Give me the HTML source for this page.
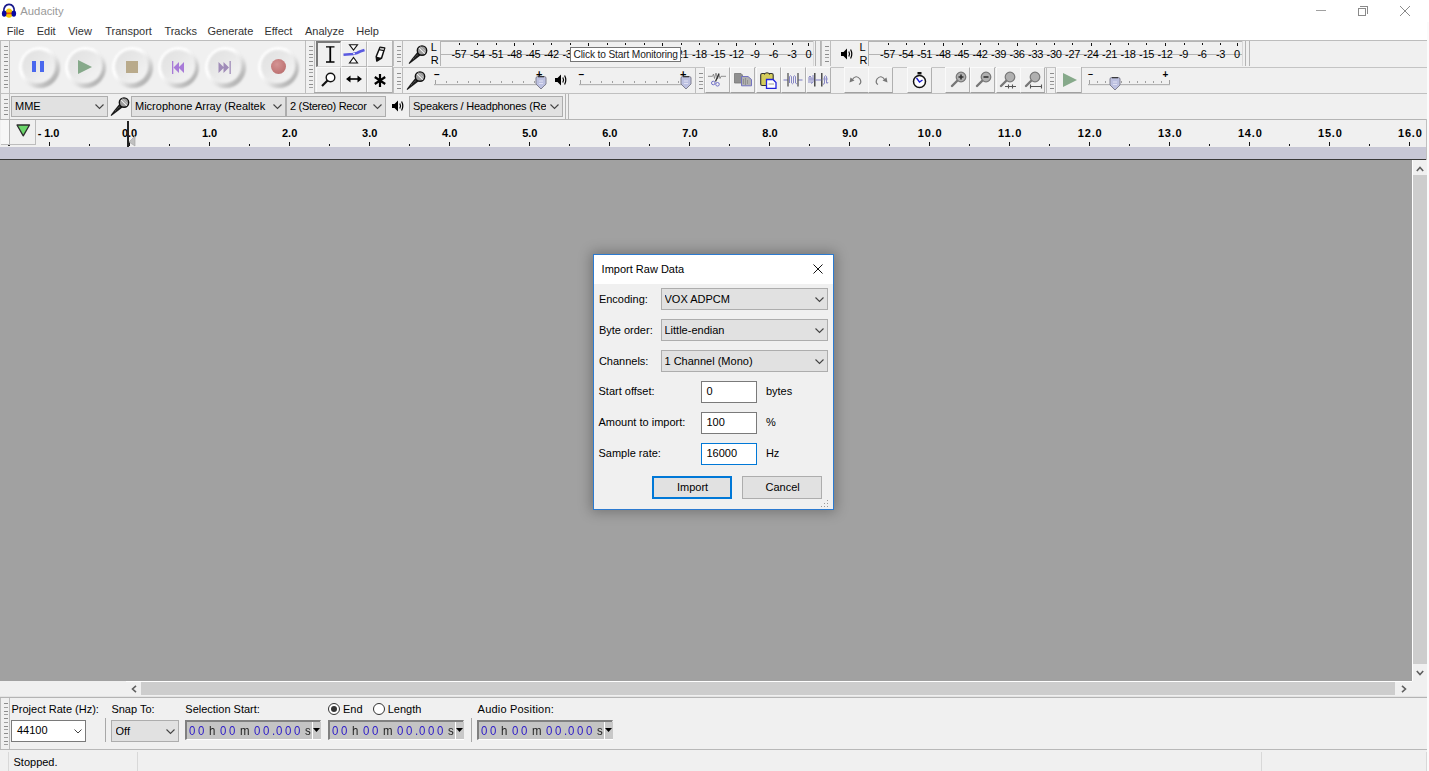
<!DOCTYPE html>
<html><head><meta charset="utf-8"><style>
*{box-sizing:border-box;margin:0;padding:0}
html,body{width:1429px;height:771px;overflow:hidden;background:#fff;font-family:"Liberation Sans",sans-serif;color:#000}
.a{position:absolute}
.t{position:absolute;white-space:nowrap;line-height:1}
svg{overflow:visible}
</style></head><body>
<div class="a" style="left:0px;top:0px;width:1429px;height:22px;background:#fff"></div>
<div class="a" style="left:0px;top:22px;width:1427px;height:18px;background:#fff"></div>
<div class="a" style="left:0px;top:40px;width:1427px;height:79px;background:#f0f0f0"></div>
<div class="a" style="left:0px;top:40px;width:1427px;height:1px;background:#bdbdbd"></div>
<div class="a" style="left:0px;top:119px;width:1427px;height:28px;background:#f0f0f0"></div>
<div class="a" style="left:0px;top:119px;width:1427px;height:1px;background:#b4b4b4"></div>
<div class="a" style="left:0px;top:147px;width:1427px;height:12px;background:#c8c8d6"></div>
<div class="a" style="left:0px;top:159px;width:1427px;height:1px;background:#3a3a3a"></div>
<div class="a" style="left:0px;top:160px;width:1412px;height:521px;background:#a1a1a1"></div>
<div class="a" style="left:1412px;top:160px;width:15px;height:521px;background:#f0f0f0"></div>
<div class="a" style="left:1412px;top:160px;width:1px;height:521px;background:#fff"></div>
<div class="a" style="left:0px;top:681px;width:1427px;height:15px;background:#f0f0f0"></div>
<div class="a" style="left:0px;top:697px;width:1427px;height:1px;background:#b4b4b4"></div>
<div class="a" style="left:0px;top:698px;width:1427px;height:52px;background:#f0f0f0"></div>
<div class="a" style="left:0px;top:696px;width:1427px;height:1px;background:#e4e4e4"></div>
<div class="a" style="left:0px;top:749px;width:1427px;height:1px;background:#b8b8b8"></div>
<div class="a" style="left:0px;top:750px;width:1427px;height:21px;background:#f0f0f0"></div>
<div class="a" style="left:1427px;top:22px;width:2px;height:749px;background:#fbfbfb"></div>
<svg class="a" style="left:1px;top:3px;" width="16" height="15" viewBox="0 0 16 15">
<path d="M2.6 9 C2.6 3.6 5.2 1.3 8 1.3 C10.8 1.3 13.4 3.6 13.4 9" fill="none" stroke="#1a1a8c" stroke-width="1.7"/>
<ellipse cx="8" cy="10.2" rx="3.8" ry="4.6" fill="#f7c800"/>
<rect x="4.3" y="9.5" width="7.4" height="1.7" fill="#ea4a10"/>
<ellipse cx="3.2" cy="10.6" rx="2.3" ry="3.2" fill="#0a0aa0"/>
<ellipse cx="12.8" cy="10.6" rx="2.3" ry="3.2" fill="#0a0aa0"/>
</svg>
<div class="t" style="left:20.30px;top:6.03px;font-size:11.3px;color:#9a9a9a;font-weight:normal;">Audacity</div>
<div class="a" style="left:1316px;top:10px;width:10px;height:1px;background:#a0a0a0"></div>
<div class="a" style="left:1358px;top:8px;width:8px;height:8px;border:1px solid #8a8a8a"></div>
<div class="a" style="left:1360px;top:6px;width:8px;height:8px;border-top:1px solid #8a8a8a;border-right:1px solid #8a8a8a"></div>
<svg class="a" style="left:1400px;top:6px;" width="10" height="10" viewBox="0 0 10 10"><path d="M0 0 L10 10 M10 0 L0 10" stroke="#8a8a8a" stroke-width="1"/></svg>
<div class="t" style="left:6.70px;top:25.69px;font-size:11px;color:#333;font-weight:normal;">File</div>
<div class="t" style="left:36.70px;top:25.69px;font-size:11px;color:#333;font-weight:normal;">Edit</div>
<div class="t" style="left:68.20px;top:25.69px;font-size:11px;color:#333;font-weight:normal;">View</div>
<div class="t" style="left:105.20px;top:25.69px;font-size:11px;color:#333;font-weight:normal;">Transport</div>
<div class="t" style="left:164.40px;top:25.69px;font-size:11px;color:#333;font-weight:normal;">Tracks</div>
<div class="t" style="left:207.40px;top:25.69px;font-size:11px;color:#333;font-weight:normal;">Generate</div>
<div class="t" style="left:264.40px;top:25.69px;font-size:11px;color:#333;font-weight:normal;">Effect</div>
<div class="t" style="left:305.00px;top:25.69px;font-size:11px;color:#333;font-weight:normal;">Analyze</div>
<div class="t" style="left:356.30px;top:25.69px;font-size:11px;color:#333;font-weight:normal;">Help</div>
<div class="a" style="left:0px;top:40px;width:1px;height:53px;background:#bdbdbd"></div>
<div class="a" style="left:0px;top:41px;width:10px;height:52px;border-left:1px solid #bdbdbd;border-right:1px solid #bdbdbd"></div>
<div class="a" style="left:4px;top:46px;width:4px;height:1px;background:#8c8c8c"></div>
<div class="a" style="left:4px;top:50px;width:4px;height:1px;background:#a0a0a0"></div>
<div class="a" style="left:4px;top:54px;width:4px;height:1px;background:#8c8c8c"></div>
<div class="a" style="left:4px;top:57px;width:4px;height:1px;background:#a0a0a0"></div>
<div class="a" style="left:4px;top:61px;width:4px;height:1px;background:#8c8c8c"></div>
<div class="a" style="left:4px;top:65px;width:4px;height:1px;background:#a0a0a0"></div>
<div class="a" style="left:4px;top:69px;width:4px;height:1px;background:#8c8c8c"></div>
<div class="a" style="left:4px;top:72px;width:4px;height:1px;background:#a0a0a0"></div>
<div class="a" style="left:4px;top:76px;width:4px;height:1px;background:#8c8c8c"></div>
<div class="a" style="left:4px;top:80px;width:4px;height:1px;background:#a0a0a0"></div>
<div class="a" style="left:4px;top:84px;width:4px;height:1px;background:#8c8c8c"></div>
<div class="a" style="left:4px;top:87px;width:4px;height:1px;background:#a0a0a0"></div>
<div class="a" style="left:305px;top:40px;width:1px;height:53px;background:#b4b4b4"></div>
<div class="a" style="left:18.5px;top:46.5px;width:41.0px;height:41.0px;border-radius:50%;background:linear-gradient(135deg,#ffffff 0%,#fdfdfd 38%,#e6e6e6 58%,#b8b8b8 80%,#9a9a9a 100%);filter:blur(1.2px)"></div>
<div class="a" style="left:21.6px;top:49.6px;width:33.8px;height:33.8px;border-radius:50%;background:linear-gradient(135deg,#e0e0e0 0%,#e7e7e7 40%,#efefef 72%,#f3f3f3 100%);filter:blur(0.8px)"></div>
<div class="a" style="left:32px;top:61px;width:4px;height:11px;background:#4a68ee"></div><div class="a" style="left:39.5px;top:61px;width:4px;height:11px;background:#4a68ee"></div>
<div class="a" style="left:65.0px;top:46.5px;width:41.0px;height:41.0px;border-radius:50%;background:linear-gradient(135deg,#ffffff 0%,#fdfdfd 38%,#e6e6e6 58%,#b8b8b8 80%,#9a9a9a 100%);filter:blur(1.2px)"></div>
<div class="a" style="left:68.1px;top:49.6px;width:33.8px;height:33.8px;border-radius:50%;background:linear-gradient(135deg,#e0e0e0 0%,#e7e7e7 40%,#efefef 72%,#f3f3f3 100%);filter:blur(0.8px)"></div>
<svg class="a" style="left:78px;top:60px" width="14" height="14"><path d="M0 0 L14 7 L0 14 Z" fill="#86a98a"/></svg>
<div class="a" style="left:111.5px;top:46.5px;width:41.0px;height:41.0px;border-radius:50%;background:linear-gradient(135deg,#ffffff 0%,#fdfdfd 38%,#e6e6e6 58%,#b8b8b8 80%,#9a9a9a 100%);filter:blur(1.2px)"></div>
<div class="a" style="left:114.6px;top:49.6px;width:33.8px;height:33.8px;border-radius:50%;background:linear-gradient(135deg,#e0e0e0 0%,#e7e7e7 40%,#efefef 72%,#f3f3f3 100%);filter:blur(0.8px)"></div>
<div class="a" style="left:125.5px;top:61px;width:12px;height:12px;background:#b9aa8b"></div>
<div class="a" style="left:158.0px;top:46.5px;width:41.0px;height:41.0px;border-radius:50%;background:linear-gradient(135deg,#ffffff 0%,#fdfdfd 38%,#e6e6e6 58%,#b8b8b8 80%,#9a9a9a 100%);filter:blur(1.2px)"></div>
<div class="a" style="left:161.1px;top:49.6px;width:33.8px;height:33.8px;border-radius:50%;background:linear-gradient(135deg,#e0e0e0 0%,#e7e7e7 40%,#efefef 72%,#f3f3f3 100%);filter:blur(0.8px)"></div>
<svg class="a" style="left:171.5px;top:60.5px" width="13" height="13"><rect x="0" y="0" width="1.3" height="13" fill="#a87ad8"/><path d="M1.5 6.5 L7 1 L7 12 Z M6.5 6.5 L12 1 L12 12 Z" fill="#a87ad8"/></svg>
<div class="a" style="left:204.5px;top:46.5px;width:41.0px;height:41.0px;border-radius:50%;background:linear-gradient(135deg,#ffffff 0%,#fdfdfd 38%,#e6e6e6 58%,#b8b8b8 80%,#9a9a9a 100%);filter:blur(1.2px)"></div>
<div class="a" style="left:207.6px;top:49.6px;width:33.8px;height:33.8px;border-radius:50%;background:linear-gradient(135deg,#e0e0e0 0%,#e7e7e7 40%,#efefef 72%,#f3f3f3 100%);filter:blur(0.8px)"></div>
<svg class="a" style="left:218px;top:60.5px" width="13" height="13"><rect x="11.5" y="0" width="1.3" height="13" fill="#a08cb8"/><path d="M0.5 1 L6 6.5 L0.5 12 Z M5.5 1 L11 6.5 L5.5 12 Z" fill="#a08cb8"/></svg>
<div class="a" style="left:258.0px;top:46.5px;width:41.0px;height:41.0px;border-radius:50%;background:linear-gradient(135deg,#ffffff 0%,#fdfdfd 38%,#e6e6e6 58%,#b8b8b8 80%,#9a9a9a 100%);filter:blur(1.2px)"></div>
<div class="a" style="left:261.1px;top:49.6px;width:33.8px;height:33.8px;border-radius:50%;background:linear-gradient(135deg,#e0e0e0 0%,#e7e7e7 40%,#efefef 72%,#f3f3f3 100%);filter:blur(0.8px)"></div>
<div class="a" style="left:270.5px;top:59px;width:15px;height:15px;border-radius:50%;background:radial-gradient(circle at 40% 35%, #d49494, #c27878 60%, #b06868)"></div>
<div class="a" style="left:305px;top:41px;width:10px;height:52px;border-left:1px solid #bdbdbd;border-right:1px solid #bdbdbd"></div>
<div class="a" style="left:309px;top:46px;width:4px;height:1px;background:#8c8c8c"></div>
<div class="a" style="left:309px;top:50px;width:4px;height:1px;background:#a0a0a0"></div>
<div class="a" style="left:309px;top:54px;width:4px;height:1px;background:#8c8c8c"></div>
<div class="a" style="left:309px;top:57px;width:4px;height:1px;background:#a0a0a0"></div>
<div class="a" style="left:309px;top:61px;width:4px;height:1px;background:#8c8c8c"></div>
<div class="a" style="left:309px;top:65px;width:4px;height:1px;background:#a0a0a0"></div>
<div class="a" style="left:309px;top:69px;width:4px;height:1px;background:#8c8c8c"></div>
<div class="a" style="left:309px;top:72px;width:4px;height:1px;background:#a0a0a0"></div>
<div class="a" style="left:309px;top:76px;width:4px;height:1px;background:#8c8c8c"></div>
<div class="a" style="left:309px;top:80px;width:4px;height:1px;background:#a0a0a0"></div>
<div class="a" style="left:309px;top:84px;width:4px;height:1px;background:#8c8c8c"></div>
<div class="a" style="left:309px;top:87px;width:4px;height:1px;background:#a0a0a0"></div>
<div class="a" style="left:316px;top:41px;width:25px;height:26px;background:#f0f0f0;border-top:2px solid #7a7a7a;border-left:2px solid #7a7a7a;border-right:1px solid #d8d8d8;border-bottom:1px solid #d8d8d8"></div>
<div class="a" style="left:341px;top:41px;width:26px;height:26px;background:#f0f0f0;border-right:1px solid #b8b8b8;border-bottom:1px solid #b8b8b8;border-top:1px solid #fafafa;border-left:1px solid #fafafa"></div>
<div class="a" style="left:367px;top:41px;width:26px;height:26px;background:#f0f0f0;border-right:1px solid #b8b8b8;border-bottom:1px solid #b8b8b8;border-top:1px solid #fafafa;border-left:1px solid #fafafa"></div>
<div class="a" style="left:316px;top:67px;width:25px;height:26px;background:#f0f0f0;border-right:1px solid #b8b8b8;border-bottom:1px solid #b8b8b8;border-top:1px solid #fafafa;border-left:1px solid #fafafa"></div>
<div class="a" style="left:341px;top:67px;width:26px;height:26px;background:#f0f0f0;border-right:1px solid #b8b8b8;border-bottom:1px solid #b8b8b8;border-top:1px solid #fafafa;border-left:1px solid #fafafa"></div>
<div class="a" style="left:367px;top:67px;width:26px;height:26px;background:#f0f0f0;border-right:1px solid #b8b8b8;border-bottom:1px solid #b8b8b8;border-top:1px solid #fafafa;border-left:1px solid #fafafa"></div>
<div class="a" style="left:314px;top:92px;width:79px;height:1px;background:#a8a8a8"></div>
<div class="a" style="left:392px;top:40px;width:1px;height:53px;background:#b4b4b4"></div>
<svg class="a" style="left:326px;top:46px;" width="9" height="17" viewBox="0 0 9 17"><path d="M0 0.8 H8.5 M0 16 H8.5" stroke="#000" stroke-width="1.3" fill="none"/><path d="M4.25 0.8 V16" stroke="#000" stroke-width="1.8"/></svg>
<svg class="a" style="left:343px;top:43.5px;" width="22" height="20" viewBox="0 0 22 20"><path d="M6.5 0.8 H14.5 L10.5 6 Z M6.5 19 H14.5 L10.5 13.5 Z" fill="#fff" stroke="#111" stroke-width="1.1"/><path d="M0.5 10.8 L10 10 L14 9 L17 7.5 L21.5 6" stroke="#5a5ae0" stroke-width="2.6" fill="none"/><circle cx="11" cy="9.6" r="0.9" fill="#fff"/></svg>
<svg class="a" style="left:375px;top:46px;" width="11" height="16" viewBox="0 0 11 16"><path d="M5 1.3 L9.7 2.1 L6.6 12 L1.8 15 L1.2 10.5 Z" fill="#fff" stroke="#111" stroke-width="1.5" stroke-linejoin="round"/><path d="M4.2 3.6 L9.1 4.6" stroke="#111" stroke-width="1.3"/><path d="M5.3 1.8 L9.1 2.5 L8.8 3.9 L4.8 3.1 Z" fill="#bbb"/><path d="M1.2 10.5 L1.8 15 L6.6 12 Z" fill="#111"/></svg>
<svg class="a" style="left:321px;top:72px;" width="15" height="15" viewBox="0 0 15 15"><circle cx="9.5" cy="5.5" r="4.3" fill="#fff" stroke="#111" stroke-width="1.4"/><path d="M6.5 8.5 L1 14" stroke="#111" stroke-width="2.2"/></svg>
<svg class="a" style="left:346px;top:75px;" width="16" height="8" viewBox="0 0 16 8"><path d="M3.5 4 H12.5" stroke="#000" stroke-width="1.6"/><path d="M0 4 L4.5 0.5 L4.5 7.5 Z M16 4 L11.5 0.5 L11.5 7.5 Z" fill="#000"/></svg>
<svg class="a" style="left:374px;top:74px;" width="12" height="13" viewBox="0 0 12 13"><path d="M6 0 V13 M0.8 3 L11.2 10 M11.2 3 L0.8 10" stroke="#000" stroke-width="2.2"/></svg>
<div class="a" style="left:393px;top:41px;width:10px;height:25px;border-left:1px solid #bdbdbd;border-right:1px solid #bdbdbd"></div>
<div class="a" style="left:397px;top:46px;width:4px;height:1px;background:#8c8c8c"></div>
<div class="a" style="left:397px;top:50px;width:4px;height:1px;background:#a0a0a0"></div>
<div class="a" style="left:397px;top:54px;width:4px;height:1px;background:#8c8c8c"></div>
<div class="a" style="left:397px;top:57px;width:4px;height:1px;background:#a0a0a0"></div>
<div class="a" style="left:397px;top:61px;width:4px;height:1px;background:#8c8c8c"></div>
<div class="a" style="left:393px;top:67px;width:1034px;height:1px;background:#c4c4c4"></div>
<svg class="a" style="left:408px;top:45px;" width="20" height="20" viewBox="0 0 20 20"><path d="M12.4 10.4 L9.2 7.2 L4.1 13.6 L0.6 18.2 L1.3 18.9 L5.9 15.4 Z" fill="#1a1a1a"/><path d="M10.3 9 L5 14.2" stroke="#888" stroke-width="0.9" stroke-dasharray="1 1"/><circle cx="14" cy="5.6" r="4.7" fill="#9c9c9c" stroke="#111" stroke-width="1.4"/><path d="M10.9 2.9 L16.8 8.6" stroke="#f0f0f0" stroke-width="1.1"/><path d="M12.5 1.8 L17.6 6.8" stroke="#c8c8c8" stroke-width="1"/></svg>
<div class="t" style="left:430.70px;top:41.69px;font-size:11px;color:#000;font-weight:normal;">L</div>
<div class="t" style="left:430.70px;top:54.69px;font-size:11px;color:#000;font-weight:normal;">R</div>
<div class="a" style="left:440px;top:41px;width:373px;height:13px;border-left:1px solid #b4b4b4;border-top:1px solid #b4b4b4"></div>
<div class="a" style="left:440px;top:54px;width:373px;height:12px;border-left:1px solid #b4b4b4;border-top:1px solid #b4b4b4"></div>
<div class="a" style="left:459px;top:43px;width:1px;height:2px;background:#111"></div>
<div class="t" style="left:443.90px;top:48.99px;width:30px;text-align:center;font-size:11px;letter-spacing:-0.35px;color:#000">-57</div>
<div class="a" style="left:477px;top:43px;width:1px;height:2px;background:#111"></div>
<div class="t" style="left:462.40px;top:48.99px;width:30px;text-align:center;font-size:11px;letter-spacing:-0.35px;color:#000">-54</div>
<div class="a" style="left:496px;top:43px;width:1px;height:2px;background:#111"></div>
<div class="t" style="left:480.90px;top:48.99px;width:30px;text-align:center;font-size:11px;letter-spacing:-0.35px;color:#000">-51</div>
<div class="a" style="left:514px;top:43px;width:1px;height:3px;background:#111"></div>
<div class="t" style="left:499.40px;top:48.99px;width:30px;text-align:center;font-size:11px;letter-spacing:-0.35px;color:#000">-48</div>
<div class="a" style="left:533px;top:43px;width:1px;height:2px;background:#111"></div>
<div class="t" style="left:517.90px;top:48.99px;width:30px;text-align:center;font-size:11px;letter-spacing:-0.35px;color:#000">-45</div>
<div class="a" style="left:551px;top:43px;width:1px;height:2px;background:#111"></div>
<div class="t" style="left:536.40px;top:48.99px;width:30px;text-align:center;font-size:11px;letter-spacing:-0.35px;color:#000">-42</div>
<div class="a" style="left:570px;top:43px;width:1px;height:2px;background:#111"></div>
<div class="t" style="left:554.90px;top:48.99px;width:30px;text-align:center;font-size:11px;letter-spacing:-0.35px;color:#000">-39</div>
<div class="a" style="left:588px;top:43px;width:1px;height:3px;background:#111"></div>
<div class="t" style="left:573.40px;top:48.99px;width:30px;text-align:center;font-size:11px;letter-spacing:-0.35px;color:#000">-36</div>
<div class="a" style="left:607px;top:43px;width:1px;height:2px;background:#111"></div>
<div class="t" style="left:591.90px;top:48.99px;width:30px;text-align:center;font-size:11px;letter-spacing:-0.35px;color:#000">-33</div>
<div class="a" style="left:625px;top:43px;width:1px;height:2px;background:#111"></div>
<div class="t" style="left:610.40px;top:48.99px;width:30px;text-align:center;font-size:11px;letter-spacing:-0.35px;color:#000">-30</div>
<div class="a" style="left:644px;top:43px;width:1px;height:2px;background:#111"></div>
<div class="t" style="left:628.90px;top:48.99px;width:30px;text-align:center;font-size:11px;letter-spacing:-0.35px;color:#000">-27</div>
<div class="a" style="left:662px;top:43px;width:1px;height:3px;background:#111"></div>
<div class="t" style="left:647.40px;top:48.99px;width:30px;text-align:center;font-size:11px;letter-spacing:-0.35px;color:#000">-24</div>
<div class="a" style="left:681px;top:43px;width:1px;height:2px;background:#111"></div>
<div class="t" style="left:665.90px;top:48.99px;width:30px;text-align:center;font-size:11px;letter-spacing:-0.35px;color:#000">-21</div>
<div class="a" style="left:699px;top:43px;width:1px;height:2px;background:#111"></div>
<div class="t" style="left:684.40px;top:48.99px;width:30px;text-align:center;font-size:11px;letter-spacing:-0.35px;color:#000">-18</div>
<div class="a" style="left:718px;top:43px;width:1px;height:2px;background:#111"></div>
<div class="t" style="left:702.90px;top:48.99px;width:30px;text-align:center;font-size:11px;letter-spacing:-0.35px;color:#000">-15</div>
<div class="a" style="left:736px;top:43px;width:1px;height:3px;background:#111"></div>
<div class="t" style="left:721.40px;top:48.99px;width:30px;text-align:center;font-size:11px;letter-spacing:-0.35px;color:#000">-12</div>
<div class="a" style="left:755px;top:43px;width:1px;height:2px;background:#111"></div>
<div class="t" style="left:739.90px;top:48.99px;width:30px;text-align:center;font-size:11px;letter-spacing:-0.35px;color:#000">-9</div>
<div class="a" style="left:773px;top:43px;width:1px;height:2px;background:#111"></div>
<div class="t" style="left:758.40px;top:48.99px;width:30px;text-align:center;font-size:11px;letter-spacing:-0.35px;color:#000">-6</div>
<div class="a" style="left:792px;top:43px;width:1px;height:2px;background:#111"></div>
<div class="t" style="left:776.90px;top:48.99px;width:30px;text-align:center;font-size:11px;letter-spacing:-0.35px;color:#000">-3</div>
<div class="a" style="left:808px;top:43px;width:1px;height:3px;background:#111"></div>
<div class="t" style="left:793.40px;top:48.99px;width:30px;text-align:center;font-size:11px;letter-spacing:-0.35px;color:#000">0</div>
<div class="a" style="left:813px;top:41px;width:1px;height:25px;background:#d8d8d8"></div>
<div class="a" style="left:815px;top:41px;width:1px;height:25px;background:#b4b4b4"></div>
<div class="a" style="left:820px;top:41px;width:1px;height:25px;background:#b4b4b4"></div>
<div class="a" style="left:821px;top:41px;width:10px;height:25px;border-left:1px solid #bdbdbd;border-right:1px solid #bdbdbd"></div>
<div class="a" style="left:825px;top:46px;width:4px;height:1px;background:#8c8c8c"></div>
<div class="a" style="left:825px;top:50px;width:4px;height:1px;background:#a0a0a0"></div>
<div class="a" style="left:825px;top:54px;width:4px;height:1px;background:#8c8c8c"></div>
<div class="a" style="left:825px;top:57px;width:4px;height:1px;background:#a0a0a0"></div>
<div class="a" style="left:825px;top:61px;width:4px;height:1px;background:#8c8c8c"></div>
<svg class="a" style="left:840.5px;top:48px;" width="12" height="12" viewBox="0 0 12 12"><path d="M0 4 H2.5 L6 0.5 V11.5 L2.5 8 H0 Z" fill="#000"/><path d="M7.8 3.5 Q9.3 6 7.8 8.5" stroke="#000" stroke-width="1.2" fill="none"/><path d="M9.6 1.5 Q12 6 9.6 10.5" stroke="#000" stroke-width="1.2" fill="none"/></svg>
<div class="t" style="left:859.50px;top:41.69px;font-size:11px;color:#000;font-weight:normal;">L</div>
<div class="t" style="left:859.50px;top:54.69px;font-size:11px;color:#000;font-weight:normal;">R</div>
<div class="a" style="left:868px;top:41px;width:374px;height:13px;border-left:1px solid #b4b4b4;border-top:1px solid #b4b4b4"></div>
<div class="a" style="left:868px;top:54px;width:374px;height:12px;border-left:1px solid #b4b4b4;border-top:1px solid #b4b4b4"></div>
<div class="a" style="left:888px;top:43px;width:1px;height:2px;background:#111"></div>
<div class="t" style="left:872.50px;top:48.99px;width:30px;text-align:center;font-size:11px;letter-spacing:-0.35px;color:#000">-57</div>
<div class="a" style="left:906px;top:43px;width:1px;height:2px;background:#111"></div>
<div class="t" style="left:891.00px;top:48.99px;width:30px;text-align:center;font-size:11px;letter-spacing:-0.35px;color:#000">-54</div>
<div class="a" style="left:924px;top:43px;width:1px;height:2px;background:#111"></div>
<div class="t" style="left:909.50px;top:48.99px;width:30px;text-align:center;font-size:11px;letter-spacing:-0.35px;color:#000">-51</div>
<div class="a" style="left:943px;top:43px;width:1px;height:3px;background:#111"></div>
<div class="t" style="left:928.00px;top:48.99px;width:30px;text-align:center;font-size:11px;letter-spacing:-0.35px;color:#000">-48</div>
<div class="a" style="left:962px;top:43px;width:1px;height:2px;background:#111"></div>
<div class="t" style="left:946.50px;top:48.99px;width:30px;text-align:center;font-size:11px;letter-spacing:-0.35px;color:#000">-45</div>
<div class="a" style="left:980px;top:43px;width:1px;height:2px;background:#111"></div>
<div class="t" style="left:965.00px;top:48.99px;width:30px;text-align:center;font-size:11px;letter-spacing:-0.35px;color:#000">-42</div>
<div class="a" style="left:998px;top:43px;width:1px;height:2px;background:#111"></div>
<div class="t" style="left:983.50px;top:48.99px;width:30px;text-align:center;font-size:11px;letter-spacing:-0.35px;color:#000">-39</div>
<div class="a" style="left:1017px;top:43px;width:1px;height:3px;background:#111"></div>
<div class="t" style="left:1002.00px;top:48.99px;width:30px;text-align:center;font-size:11px;letter-spacing:-0.35px;color:#000">-36</div>
<div class="a" style="left:1036px;top:43px;width:1px;height:2px;background:#111"></div>
<div class="t" style="left:1020.50px;top:48.99px;width:30px;text-align:center;font-size:11px;letter-spacing:-0.35px;color:#000">-33</div>
<div class="a" style="left:1054px;top:43px;width:1px;height:2px;background:#111"></div>
<div class="t" style="left:1039.00px;top:48.99px;width:30px;text-align:center;font-size:11px;letter-spacing:-0.35px;color:#000">-30</div>
<div class="a" style="left:1072px;top:43px;width:1px;height:2px;background:#111"></div>
<div class="t" style="left:1057.50px;top:48.99px;width:30px;text-align:center;font-size:11px;letter-spacing:-0.35px;color:#000">-27</div>
<div class="a" style="left:1091px;top:43px;width:1px;height:3px;background:#111"></div>
<div class="t" style="left:1076.00px;top:48.99px;width:30px;text-align:center;font-size:11px;letter-spacing:-0.35px;color:#000">-24</div>
<div class="a" style="left:1110px;top:43px;width:1px;height:2px;background:#111"></div>
<div class="t" style="left:1094.50px;top:48.99px;width:30px;text-align:center;font-size:11px;letter-spacing:-0.35px;color:#000">-21</div>
<div class="a" style="left:1128px;top:43px;width:1px;height:2px;background:#111"></div>
<div class="t" style="left:1113.00px;top:48.99px;width:30px;text-align:center;font-size:11px;letter-spacing:-0.35px;color:#000">-18</div>
<div class="a" style="left:1146px;top:43px;width:1px;height:2px;background:#111"></div>
<div class="t" style="left:1131.50px;top:48.99px;width:30px;text-align:center;font-size:11px;letter-spacing:-0.35px;color:#000">-15</div>
<div class="a" style="left:1165px;top:43px;width:1px;height:3px;background:#111"></div>
<div class="t" style="left:1150.00px;top:48.99px;width:30px;text-align:center;font-size:11px;letter-spacing:-0.35px;color:#000">-12</div>
<div class="a" style="left:1184px;top:43px;width:1px;height:2px;background:#111"></div>
<div class="t" style="left:1168.50px;top:48.99px;width:30px;text-align:center;font-size:11px;letter-spacing:-0.35px;color:#000">-9</div>
<div class="a" style="left:1202px;top:43px;width:1px;height:2px;background:#111"></div>
<div class="t" style="left:1187.00px;top:48.99px;width:30px;text-align:center;font-size:11px;letter-spacing:-0.35px;color:#000">-6</div>
<div class="a" style="left:1220px;top:43px;width:1px;height:2px;background:#111"></div>
<div class="t" style="left:1205.50px;top:48.99px;width:30px;text-align:center;font-size:11px;letter-spacing:-0.35px;color:#000">-3</div>
<div class="a" style="left:1237px;top:43px;width:1px;height:3px;background:#111"></div>
<div class="t" style="left:1222.00px;top:48.99px;width:30px;text-align:center;font-size:11px;letter-spacing:-0.35px;color:#000">0</div>
<div class="a" style="left:1242px;top:41px;width:1px;height:25px;background:#d8d8d8"></div>
<div class="a" style="left:1245px;top:41px;width:1px;height:25px;background:#b4b4b4"></div>
<div class="a" style="left:1249px;top:41px;width:1px;height:25px;background:#b4b4b4"></div>
<div class="a" style="left:393px;top:68px;width:10px;height:25px;border-left:1px solid #bdbdbd;border-right:1px solid #bdbdbd"></div>
<div class="a" style="left:397px;top:73px;width:4px;height:1px;background:#8c8c8c"></div>
<div class="a" style="left:397px;top:77px;width:4px;height:1px;background:#a0a0a0"></div>
<div class="a" style="left:397px;top:81px;width:4px;height:1px;background:#8c8c8c"></div>
<div class="a" style="left:397px;top:84px;width:4px;height:1px;background:#a0a0a0"></div>
<div class="a" style="left:397px;top:88px;width:4px;height:1px;background:#8c8c8c"></div>
<svg class="a" style="left:406px;top:71px;" width="20" height="20" viewBox="0 0 20 20"><path d="M12.4 10.4 L9.2 7.2 L4.1 13.6 L0.6 18.2 L1.3 18.9 L5.9 15.4 Z" fill="#1a1a1a"/><path d="M10.3 9 L5 14.2" stroke="#888" stroke-width="0.9" stroke-dasharray="1 1"/><circle cx="14" cy="5.6" r="4.7" fill="#9c9c9c" stroke="#111" stroke-width="1.4"/><path d="M10.9 2.9 L16.8 8.6" stroke="#f0f0f0" stroke-width="1.1"/><path d="M12.5 1.8 L17.6 6.8" stroke="#c8c8c8" stroke-width="1"/></svg>
<div class="t" style="left:434.00px;top:69.53px;font-size:10px;color:#000;font-weight:bold;">&#8211;</div>
<div class="a" style="left:434px;top:84px;width:112px;height:1px;background:#b4b4b4"></div>
<div class="a" style="left:434px;top:85px;width:112px;height:1px;background:#e4e4e4"></div>
<div class="a" style="left:435px;top:80px;width:1px;height:4px;background:#a0a0a0"></div>
<div class="a" style="left:446px;top:81px;width:1px;height:2px;background:#a0a0a0"></div>
<div class="a" style="left:457px;top:81px;width:1px;height:2px;background:#a0a0a0"></div>
<div class="a" style="left:468px;top:81px;width:1px;height:2px;background:#a0a0a0"></div>
<div class="a" style="left:479px;top:81px;width:1px;height:2px;background:#a0a0a0"></div>
<div class="a" style="left:490px;top:81px;width:1px;height:2px;background:#a0a0a0"></div>
<div class="a" style="left:501px;top:81px;width:1px;height:2px;background:#a0a0a0"></div>
<div class="a" style="left:512px;top:81px;width:1px;height:2px;background:#a0a0a0"></div>
<div class="a" style="left:523px;top:81px;width:1px;height:2px;background:#a0a0a0"></div>
<div class="a" style="left:534px;top:81px;width:1px;height:2px;background:#a0a0a0"></div>
<div class="a" style="left:545px;top:80px;width:1px;height:4px;background:#a0a0a0"></div>
<div class="t" style="left:536.00px;top:68.69px;font-size:11px;color:#000;font-weight:bold;">+</div>
<svg class="a" style="left:535px;top:76px;" width="12" height="14" viewBox="0 0 12 14"><path d="M1 2 Q1 0.5 3 0.5 H9 Q11 0.5 11 2 V8 L6 13 L1 8 Z" fill="#bcc0e0" stroke="#808090" stroke-width="1"/><path d="M3 0.7 H9" stroke="#333" stroke-width="1.2"/><path d="M4 5 H8 M4 7.5 H8" stroke="#e8e8f8" stroke-width="0.8"/></svg>
<svg class="a" style="left:555px;top:74px;" width="12" height="12" viewBox="0 0 12 12"><path d="M0 4 H2.5 L6 0.5 V11.5 L2.5 8 H0 Z" fill="#000"/><path d="M7.8 3.5 Q9.3 6 7.8 8.5" stroke="#000" stroke-width="1.2" fill="none"/><path d="M9.6 1.5 Q12 6 9.6 10.5" stroke="#000" stroke-width="1.2" fill="none"/></svg>
<div class="t" style="left:578.50px;top:69.53px;font-size:10px;color:#000;font-weight:bold;">&#8211;</div>
<div class="a" style="left:578.5px;top:84px;width:111.5px;height:1px;background:#b4b4b4"></div>
<div class="a" style="left:578.5px;top:85px;width:111.5px;height:1px;background:#e4e4e4"></div>
<div class="a" style="left:580px;top:80px;width:1px;height:4px;background:#a0a0a0"></div>
<div class="a" style="left:590px;top:81px;width:1px;height:2px;background:#a0a0a0"></div>
<div class="a" style="left:601px;top:81px;width:1px;height:2px;background:#a0a0a0"></div>
<div class="a" style="left:612px;top:81px;width:1px;height:2px;background:#a0a0a0"></div>
<div class="a" style="left:623px;top:81px;width:1px;height:2px;background:#a0a0a0"></div>
<div class="a" style="left:634px;top:81px;width:1px;height:2px;background:#a0a0a0"></div>
<div class="a" style="left:645px;top:81px;width:1px;height:2px;background:#a0a0a0"></div>
<div class="a" style="left:656px;top:81px;width:1px;height:2px;background:#a0a0a0"></div>
<div class="a" style="left:667px;top:81px;width:1px;height:2px;background:#a0a0a0"></div>
<div class="a" style="left:678px;top:81px;width:1px;height:2px;background:#a0a0a0"></div>
<div class="a" style="left:689px;top:80px;width:1px;height:4px;background:#a0a0a0"></div>
<div class="t" style="left:680.00px;top:68.69px;font-size:11px;color:#000;font-weight:bold;">+</div>
<svg class="a" style="left:679.5px;top:76px;" width="12" height="14" viewBox="0 0 12 14"><path d="M1 2 Q1 0.5 3 0.5 H9 Q11 0.5 11 2 V8 L6 13 L1 8 Z" fill="#bcc0e0" stroke="#808090" stroke-width="1"/><path d="M3 0.7 H9" stroke="#333" stroke-width="1.2"/><path d="M4 5 H8 M4 7.5 H8" stroke="#e8e8f8" stroke-width="0.8"/></svg>
<div class="a" style="left:695px;top:68px;width:10px;height:25px;border-left:1px solid #bdbdbd;border-right:1px solid #bdbdbd"></div>
<div class="a" style="left:699px;top:73px;width:4px;height:1px;background:#8c8c8c"></div>
<div class="a" style="left:699px;top:77px;width:4px;height:1px;background:#a0a0a0"></div>
<div class="a" style="left:699px;top:81px;width:4px;height:1px;background:#8c8c8c"></div>
<div class="a" style="left:699px;top:84px;width:4px;height:1px;background:#a0a0a0"></div>
<div class="a" style="left:699px;top:88px;width:4px;height:1px;background:#8c8c8c"></div>
<div class="a" style="left:705px;top:67px;width:25px;height:26px;border-right:1px solid #b0b0b0;border-bottom:1px solid #a0a0a0;border-left:1px solid #fafafa;border-top:1px solid #fafafa"></div>
<div class="a" style="left:730px;top:67px;width:25px;height:26px;border-right:1px solid #b0b0b0;border-bottom:1px solid #a0a0a0;border-left:1px solid #fafafa;border-top:1px solid #fafafa"></div>
<div class="a" style="left:756px;top:67px;width:25px;height:26px;border-right:1px solid #b0b0b0;border-bottom:1px solid #a0a0a0;border-left:1px solid #fafafa;border-top:1px solid #fafafa"></div>
<div class="a" style="left:781px;top:67px;width:25px;height:26px;border-right:1px solid #b0b0b0;border-bottom:1px solid #a0a0a0;border-left:1px solid #fafafa;border-top:1px solid #fafafa"></div>
<div class="a" style="left:806px;top:67px;width:25px;height:26px;border-right:1px solid #b0b0b0;border-bottom:1px solid #a0a0a0;border-left:1px solid #fafafa;border-top:1px solid #fafafa"></div>
<div class="a" style="left:844px;top:67px;width:25px;height:26px;border-right:1px solid #b0b0b0;border-bottom:1px solid #a0a0a0;border-left:1px solid #fafafa;border-top:1px solid #fafafa"></div>
<div class="a" style="left:868px;top:67px;width:25px;height:26px;border-right:1px solid #b0b0b0;border-bottom:1px solid #a0a0a0;border-left:1px solid #fafafa;border-top:1px solid #fafafa"></div>
<div class="a" style="left:907px;top:67px;width:25px;height:26px;border-right:1px solid #b0b0b0;border-bottom:1px solid #a0a0a0;border-left:1px solid #fafafa;border-top:1px solid #fafafa"></div>
<div class="a" style="left:945px;top:67px;width:25px;height:26px;border-right:1px solid #b0b0b0;border-bottom:1px solid #a0a0a0;border-left:1px solid #fafafa;border-top:1px solid #fafafa"></div>
<div class="a" style="left:970px;top:67px;width:25px;height:26px;border-right:1px solid #b0b0b0;border-bottom:1px solid #a0a0a0;border-left:1px solid #fafafa;border-top:1px solid #fafafa"></div>
<div class="a" style="left:996px;top:67px;width:25px;height:26px;border-right:1px solid #b0b0b0;border-bottom:1px solid #a0a0a0;border-left:1px solid #fafafa;border-top:1px solid #fafafa"></div>
<div class="a" style="left:1020px;top:67px;width:25px;height:26px;border-right:1px solid #b0b0b0;border-bottom:1px solid #a0a0a0;border-left:1px solid #fafafa;border-top:1px solid #fafafa"></div>
<svg class="a" style="left:707px;top:72px;" width="20" height="14" viewBox="0 0 20 14"><path d="M1 4.3 H5.5 L6.5 2 L7.5 6.5 L9 1 L10.5 7 L12 2.5 L13 6.5 L14 4.3 H19" stroke="#777" stroke-width="0.8" fill="none"/><path d="M12 1.5 L8.5 9.5" stroke="#333" stroke-width="1.3"/></svg>
<svg class="a" style="left:711px;top:80px;" width="9" height="7" viewBox="0 0 9 7"><circle cx="2.3" cy="3" r="1.8" fill="none" stroke="#7070c8" stroke-width="1"/><circle cx="6.5" cy="4.3" r="1.8" fill="none" stroke="#7070c8" stroke-width="1"/></svg>
<svg class="a" style="left:733.5px;top:72.5px;" width="19" height="14" viewBox="0 0 19 14"><path d="M0.5 0.5 H7 L8.5 2 V10 H0.5 Z" fill="#909090" stroke="#777" stroke-width="0.8"/><path d="M7.5 3.5 H14 L17.5 6.5 V12.8 H7.5 Z" fill="#b0b0b0" stroke="#7272c0" stroke-width="1"/><path d="M9.5 6 V11 M11.5 5 V12 M13.5 7 V11" stroke="#888" stroke-width="0.8"/></svg>
<svg class="a" style="left:759.5px;top:71.5px;" width="18" height="18" viewBox="0 0 18 18"><rect x="0.7" y="1.5" width="12.5" height="12" rx="1.5" fill="#d4cc5c" stroke="#333" stroke-width="1.1"/><path d="M4 2.5 Q7 -1 10 2.5" fill="#d4cc5c" stroke="#333" stroke-width="1"/><path d="M6.5 7.5 H13 L16 10.5 V16.3 H6.5 Z" fill="#fff" stroke="#2222dd" stroke-width="1.3"/><path d="M8.5 12 H14" stroke="#bbb" stroke-width="1.5"/></svg>
<svg class="a" style="left:783px;top:72px;" width="20" height="15" viewBox="0 0 20 15"><path d="M0.5 8 H5 M15 8 H19.5" stroke="#7a7ac0" stroke-width="1"/><path d="M5 1 V14.5 M15 1 V14.5" stroke="#555" stroke-width="1.3"/><path d="M6.5 11 V4.5 Q7.5 3 8.5 4.5 V11 Q9.5 12.5 10.5 11 V4.5 Q11.5 3 12.5 4.5 V11 Q13.5 12.5 14 11" stroke="#7a7ac0" stroke-width="0.9" fill="none"/></svg>
<svg class="a" style="left:807.5px;top:72px;" width="21" height="15" viewBox="0 0 21 15"><path d="M1 11 V5 Q2 3 3 5 V11 Q4 12 5 10 V3 M15 12 Q16 13 16.5 11 V4.5 Q17.5 3 18.5 4.5 V11 Q19.5 12 20 10" stroke="#7a7ac0" stroke-width="0.9" fill="none"/><path d="M1 7 H6 M15 7 H20" stroke="#9a9ad0" stroke-width="2.4" opacity="0.5"/><path d="M6.8 1 V14.5 M13.8 1 V14.5" stroke="#333" stroke-width="1.3"/><path d="M7 8 H13.5" stroke="#7a7ac0" stroke-width="1"/></svg>
<svg class="a" style="left:849px;top:75px;" width="14" height="10" viewBox="0 0 14 10"><path d="M3 5 Q7 -1 11 4 Q13 8 10 9.5" stroke="#777" stroke-width="1.2" fill="none"/><path d="M0.5 7.5 L1.5 2.5 L5.5 5.5 Z" fill="#777"/></svg>
<svg class="a" style="left:874px;top:75px;" width="14" height="10" viewBox="0 0 14 10"><path d="M11 5 Q7 -1 3 4 Q1 8 4 9.5" stroke="#777" stroke-width="1.2" fill="none"/><path d="M13.5 7.5 L12.5 2.5 L8.5 5.5 Z" fill="#777"/></svg>
<svg class="a" style="left:912px;top:72px;" width="15" height="17" viewBox="0 0 15 17"><rect x="5.5" y="0" width="4" height="2.5" fill="#111"/><circle cx="7.5" cy="9.5" r="6" fill="#fff" stroke="#111" stroke-width="1.5"/><path d="M4.5 6 L7.5 10 L10.5 8" stroke="#1a1ad0" stroke-width="1.3" fill="none"/></svg>
<svg class="a" style="left:950px;top:71px;" width="20" height="18" viewBox="0 0 20 18"><path d="M2 15 L7 10" stroke="#777" stroke-width="2.4" stroke-linecap="round"/><circle cx="11" cy="6" r="4.8" fill="#b0b0b0" stroke="#777" stroke-width="1.2"/><path d="M8.5 6 H13.5 M11 3.5 V8.5" stroke="#333" stroke-width="1.6"/></svg>
<svg class="a" style="left:975px;top:71px;" width="20" height="18" viewBox="0 0 20 18"><path d="M2 15 L7 10" stroke="#777" stroke-width="2.4" stroke-linecap="round"/><circle cx="11" cy="6" r="4.8" fill="#b0b0b0" stroke="#777" stroke-width="1.2"/><path d="M8.5 6 H13.5" stroke="#333" stroke-width="1.6"/></svg>
<svg class="a" style="left:999px;top:71px;" width="20" height="18" viewBox="0 0 20 18"><path d="M2 15 L7 10" stroke="#777" stroke-width="2.4" stroke-linecap="round"/><circle cx="11" cy="6" r="4.8" fill="#b0b0b0" stroke="#777" stroke-width="1.2"/><path d="M6 15.5 H17 M9.5 13.5 V17.5 M13.5 13.5 V17.5" stroke="#555" stroke-width="1.1"/></svg>
<svg class="a" style="left:1024px;top:71px;" width="20" height="18" viewBox="0 0 20 18"><path d="M2 15 L7 10" stroke="#777" stroke-width="2.4" stroke-linecap="round"/><circle cx="11" cy="6" r="4.8" fill="#b0b0b0" stroke="#777" stroke-width="1.2"/><path d="M6.5 15.5 H17.5 M6.5 13.5 V17.5 M17.5 13.5 V17.5" stroke="#555" stroke-width="1.1"/></svg>
<div class="a" style="left:1046px;top:68px;width:10px;height:25px;border-left:1px solid #bdbdbd;border-right:1px solid #bdbdbd"></div>
<div class="a" style="left:1050px;top:73px;width:4px;height:1px;background:#8c8c8c"></div>
<div class="a" style="left:1050px;top:77px;width:4px;height:1px;background:#a0a0a0"></div>
<div class="a" style="left:1050px;top:81px;width:4px;height:1px;background:#8c8c8c"></div>
<div class="a" style="left:1050px;top:84px;width:4px;height:1px;background:#a0a0a0"></div>
<div class="a" style="left:1050px;top:88px;width:4px;height:1px;background:#8c8c8c"></div>
<div class="a" style="left:1056px;top:67px;width:26px;height:26px;border-right:1px solid #b0b0b0;border-bottom:1px solid #a0a0a0;border-left:1px solid #fafafa;border-top:1px solid #fafafa"></div>
<svg class="a" style="left:1062.5px;top:73px;" width="14" height="14" viewBox="0 0 14 14"><path d="M0 0 L14 7 L0 14 Z" fill="#86a98a"/></svg>
<div class="a" style="left:1081px;top:67px;width:1px;height:26px;background:#b4b4b4"></div>
<div class="t" style="left:1088.00px;top:69.88px;font-size:9px;color:#000;font-weight:bold;">&#8211;</div>
<div class="t" style="left:1162.50px;top:69.53px;font-size:10px;color:#000;font-weight:bold;">+</div>
<div class="a" style="left:1088px;top:84px;width:82px;height:1px;background:#b4b4b4"></div>
<div class="a" style="left:1088px;top:85px;width:82px;height:1px;background:#e4e4e4"></div>
<div class="a" style="left:1089px;top:80px;width:1px;height:4px;background:#a0a0a0"></div>
<div class="a" style="left:1097px;top:81px;width:1px;height:2px;background:#a0a0a0"></div>
<div class="a" style="left:1105px;top:81px;width:1px;height:2px;background:#a0a0a0"></div>
<div class="a" style="left:1113px;top:81px;width:1px;height:2px;background:#a0a0a0"></div>
<div class="a" style="left:1121px;top:81px;width:1px;height:2px;background:#a0a0a0"></div>
<div class="a" style="left:1129px;top:81px;width:1px;height:2px;background:#a0a0a0"></div>
<div class="a" style="left:1137px;top:81px;width:1px;height:2px;background:#a0a0a0"></div>
<div class="a" style="left:1145px;top:81px;width:1px;height:2px;background:#a0a0a0"></div>
<div class="a" style="left:1153px;top:81px;width:1px;height:2px;background:#a0a0a0"></div>
<div class="a" style="left:1161px;top:81px;width:1px;height:2px;background:#a0a0a0"></div>
<div class="a" style="left:1169px;top:80px;width:1px;height:4px;background:#a0a0a0"></div>
<svg class="a" style="left:1108.5px;top:76.5px;" width="12" height="14" viewBox="0 0 12 14"><path d="M1 2 Q1 0.5 3 0.5 H9 Q11 0.5 11 2 V8 L6 13 L1 8 Z" fill="#bcc0e0" stroke="#808090" stroke-width="1"/><path d="M3 0.7 H9" stroke="#333" stroke-width="1.2"/><path d="M4 5 H8 M4 7.5 H8" stroke="#e8e8f8" stroke-width="0.8"/></svg>
<div class="a" style="left:0px;top:94px;width:10px;height:25px;border-left:1px solid #bdbdbd;border-right:1px solid #bdbdbd"></div>
<div class="a" style="left:4px;top:99px;width:4px;height:1px;background:#8c8c8c"></div>
<div class="a" style="left:4px;top:103px;width:4px;height:1px;background:#a0a0a0"></div>
<div class="a" style="left:4px;top:107px;width:4px;height:1px;background:#8c8c8c"></div>
<div class="a" style="left:4px;top:110px;width:4px;height:1px;background:#a0a0a0"></div>
<div class="a" style="left:4px;top:114px;width:4px;height:1px;background:#8c8c8c"></div>
<div class="a" style="left:0px;top:93px;width:1427px;height:1px;background:#c0c0c0"></div>
<div class="a" style="left:11px;top:96px;width:97px;height:21px;background:#e1e1e1;border:1px solid #adadad"></div>
<div class="a" style="left:15px;top:97px;width:77px;height:19px;overflow:hidden"><div class="t" style="left:0;top:4.19px;font-size:11px;color:#000;letter-spacing:0px">MME</div></div>
<svg class="a" style="left:95px;top:104.0px;" width="9" height="5" viewBox="0 0 9 5"><path d="M0.5 0.5 L4.5 4.5 L8.5 0.5" stroke="#444" stroke-width="1.1" fill="none"/></svg>
<svg class="a" style="left:110px;top:97px;" width="20" height="20" viewBox="0 0 20 20"><path d="M12.4 10.4 L9.2 7.2 L4.1 13.6 L0.6 18.2 L1.3 18.9 L5.9 15.4 Z" fill="#1a1a1a"/><path d="M10.3 9 L5 14.2" stroke="#888" stroke-width="0.9" stroke-dasharray="1 1"/><circle cx="14" cy="5.6" r="4.7" fill="#9c9c9c" stroke="#111" stroke-width="1.4"/><path d="M10.9 2.9 L16.8 8.6" stroke="#f0f0f0" stroke-width="1.1"/><path d="M12.5 1.8 L17.6 6.8" stroke="#c8c8c8" stroke-width="1"/></svg>
<div class="a" style="left:131px;top:96px;width:155px;height:21px;background:#e1e1e1;border:1px solid #adadad"></div>
<div class="a" style="left:135px;top:97px;width:135px;height:19px;overflow:hidden"><div class="t" style="left:0;top:4.19px;font-size:11px;color:#000;letter-spacing:0px">Microphone Array (Realtek</div></div>
<svg class="a" style="left:273px;top:104.0px;" width="9" height="5" viewBox="0 0 9 5"><path d="M0.5 0.5 L4.5 4.5 L8.5 0.5" stroke="#444" stroke-width="1.1" fill="none"/></svg>
<div class="a" style="left:286px;top:96px;width:100px;height:21px;background:#e1e1e1;border:1px solid #adadad"></div>
<div class="a" style="left:290px;top:97px;width:77px;height:19px;overflow:hidden"><div class="t" style="left:0;top:4.19px;font-size:11px;color:#000;letter-spacing:-0.3px">2 (Stereo) Recor</div></div>
<svg class="a" style="left:373px;top:104.0px;" width="9" height="5" viewBox="0 0 9 5"><path d="M0.5 0.5 L4.5 4.5 L8.5 0.5" stroke="#444" stroke-width="1.1" fill="none"/></svg>
<svg class="a" style="left:392px;top:100px;" width="12" height="12" viewBox="0 0 12 12"><path d="M0 4 H2.5 L6 0.5 V11.5 L2.5 8 H0 Z" fill="#000"/><path d="M7.8 3.5 Q9.3 6 7.8 8.5" stroke="#000" stroke-width="1.2" fill="none"/><path d="M9.6 1.5 Q12 6 9.6 10.5" stroke="#000" stroke-width="1.2" fill="none"/></svg>
<div class="a" style="left:409px;top:96px;width:154px;height:21px;background:#e1e1e1;border:1px solid #adadad"></div>
<div class="a" style="left:413px;top:97px;width:133px;height:19px;overflow:hidden"><div class="t" style="left:0;top:4.19px;font-size:11px;color:#000;letter-spacing:-0.22px">Speakers / Headphones (Re</div></div>
<svg class="a" style="left:550px;top:104.0px;" width="9" height="5" viewBox="0 0 9 5"><path d="M0.5 0.5 L4.5 4.5 L8.5 0.5" stroke="#444" stroke-width="1.1" fill="none"/></svg>
<div class="a" style="left:565px;top:94px;width:1px;height:25px;background:#b4b4b4"></div>
<div class="a" style="left:568px;top:94px;width:1px;height:25px;background:#b4b4b4"></div>
<div class="a" style="left:570px;top:47px;width:111px;height:15px;background:#fff;border:1px solid #767676"></div>
<div class="t" style="left:573.50px;top:49.57px;font-size:10.2px;color:#222;font-weight:normal;letter-spacing:-0.15px">Click to Start Monitoring</div>
<div class="a" style="left:1px;top:120px;width:8px;height:24px;background:#f7f7f7"></div>
<div class="a" style="left:9px;top:120px;width:1px;height:25px;background:#b4b4b4"></div>
<div class="a" style="left:10px;top:120px;width:26px;height:25px;border-right:1px solid #bcbcbc;border-bottom:1px solid #bcbcbc"></div>
<div class="a" style="left:1px;top:144px;width:9px;height:1px;background:#bcbcbc"></div>
<div class="a" style="left:8px;top:145px;width:2px;height:1px;background:#333"></div>
<svg class="a" style="left:16.3px;top:123.5px;" width="15" height="13" viewBox="0 0 15 13"><path d="M1 1 H13.5 L7.25 11.8 Z" fill="#6ad66a" stroke="#2e2e2e" stroke-width="1.3" stroke-linejoin="round"/></svg>
<div class="t" style="left:37.80px;top:127.69px;font-size:11px;color:#000;font-weight:bold;">-</div>
<div class="t" style="left:44.20px;top:127.69px;font-size:11px;color:#000;font-weight:bold;">1.0</div>
<div class="a" style="left:49px;top:142px;width:1px;height:4px;background:#111"></div>
<div class="a" style="left:89px;top:144px;width:1px;height:2px;background:#111"></div>
<div class="t" style="left:109.55px;top:127.69px;width:40px;text-align:center;font-size:11px;font-weight:bold;letter-spacing:0px">0.0</div>
<div class="a" style="left:129px;top:142px;width:1px;height:4px;background:#111"></div>
<div class="a" style="left:169px;top:144px;width:1px;height:2px;background:#111"></div>
<div class="t" style="left:189.60px;top:127.69px;width:40px;text-align:center;font-size:11px;font-weight:bold;letter-spacing:0px">1.0</div>
<div class="a" style="left:209px;top:142px;width:1px;height:4px;background:#111"></div>
<div class="a" style="left:249px;top:144px;width:1px;height:2px;background:#111"></div>
<div class="t" style="left:269.65px;top:127.69px;width:40px;text-align:center;font-size:11px;font-weight:bold;letter-spacing:0px">2.0</div>
<div class="a" style="left:289px;top:142px;width:1px;height:4px;background:#111"></div>
<div class="a" style="left:329px;top:144px;width:1px;height:2px;background:#111"></div>
<div class="t" style="left:349.70px;top:127.69px;width:40px;text-align:center;font-size:11px;font-weight:bold;letter-spacing:0px">3.0</div>
<div class="a" style="left:369px;top:142px;width:1px;height:4px;background:#111"></div>
<div class="a" style="left:409px;top:144px;width:1px;height:2px;background:#111"></div>
<div class="t" style="left:429.75px;top:127.69px;width:40px;text-align:center;font-size:11px;font-weight:bold;letter-spacing:0px">4.0</div>
<div class="a" style="left:449px;top:142px;width:1px;height:4px;background:#111"></div>
<div class="a" style="left:489px;top:144px;width:1px;height:2px;background:#111"></div>
<div class="t" style="left:509.80px;top:127.69px;width:40px;text-align:center;font-size:11px;font-weight:bold;letter-spacing:0px">5.0</div>
<div class="a" style="left:529px;top:142px;width:1px;height:4px;background:#111"></div>
<div class="a" style="left:569px;top:144px;width:1px;height:2px;background:#111"></div>
<div class="t" style="left:589.85px;top:127.69px;width:40px;text-align:center;font-size:11px;font-weight:bold;letter-spacing:0px">6.0</div>
<div class="a" style="left:609px;top:142px;width:1px;height:4px;background:#111"></div>
<div class="a" style="left:649px;top:144px;width:1px;height:2px;background:#111"></div>
<div class="t" style="left:669.90px;top:127.69px;width:40px;text-align:center;font-size:11px;font-weight:bold;letter-spacing:0px">7.0</div>
<div class="a" style="left:689px;top:142px;width:1px;height:4px;background:#111"></div>
<div class="a" style="left:729px;top:144px;width:1px;height:2px;background:#111"></div>
<div class="t" style="left:749.95px;top:127.69px;width:40px;text-align:center;font-size:11px;font-weight:bold;letter-spacing:0px">8.0</div>
<div class="a" style="left:769px;top:142px;width:1px;height:4px;background:#111"></div>
<div class="a" style="left:809px;top:144px;width:1px;height:2px;background:#111"></div>
<div class="t" style="left:830.00px;top:127.69px;width:40px;text-align:center;font-size:11px;font-weight:bold;letter-spacing:0px">9.0</div>
<div class="a" style="left:849px;top:142px;width:1px;height:4px;background:#111"></div>
<div class="a" style="left:889px;top:144px;width:1px;height:2px;background:#111"></div>
<div class="t" style="left:910.05px;top:127.69px;width:40px;text-align:center;font-size:11px;font-weight:bold;letter-spacing:0.8px">10.0</div>
<div class="a" style="left:929px;top:142px;width:1px;height:4px;background:#111"></div>
<div class="a" style="left:969px;top:144px;width:1px;height:2px;background:#111"></div>
<div class="t" style="left:990.10px;top:127.69px;width:40px;text-align:center;font-size:11px;font-weight:bold;letter-spacing:0.8px">11.0</div>
<div class="a" style="left:1009px;top:142px;width:1px;height:4px;background:#111"></div>
<div class="a" style="left:1049px;top:144px;width:1px;height:2px;background:#111"></div>
<div class="t" style="left:1070.15px;top:127.69px;width:40px;text-align:center;font-size:11px;font-weight:bold;letter-spacing:0.8px">12.0</div>
<div class="a" style="left:1089px;top:142px;width:1px;height:4px;background:#111"></div>
<div class="a" style="left:1129px;top:144px;width:1px;height:2px;background:#111"></div>
<div class="t" style="left:1150.20px;top:127.69px;width:40px;text-align:center;font-size:11px;font-weight:bold;letter-spacing:0.8px">13.0</div>
<div class="a" style="left:1169px;top:142px;width:1px;height:4px;background:#111"></div>
<div class="a" style="left:1209px;top:144px;width:1px;height:2px;background:#111"></div>
<div class="t" style="left:1230.25px;top:127.69px;width:40px;text-align:center;font-size:11px;font-weight:bold;letter-spacing:0.8px">14.0</div>
<div class="a" style="left:1249px;top:142px;width:1px;height:4px;background:#111"></div>
<div class="a" style="left:1289px;top:144px;width:1px;height:2px;background:#111"></div>
<div class="t" style="left:1310.30px;top:127.69px;width:40px;text-align:center;font-size:11px;font-weight:bold;letter-spacing:0.8px">15.0</div>
<div class="a" style="left:1329px;top:142px;width:1px;height:4px;background:#111"></div>
<div class="a" style="left:1369px;top:144px;width:1px;height:2px;background:#111"></div>
<div class="t" style="left:1390.35px;top:127.69px;width:40px;text-align:center;font-size:11px;font-weight:bold;letter-spacing:0.8px">16.0</div>
<div class="a" style="left:1409px;top:142px;width:1px;height:4px;background:#111"></div>
<div class="a" style="left:127px;top:121px;width:1.5px;height:26px;background:#222"></div>
<svg class="a" style="left:128.5px;top:136px;" width="7" height="11" viewBox="0 0 7 11"><path d="M6 0 L0 6 L6 10 Z" fill="#c0c0c0" stroke="#a0a0a0" stroke-width="0.6"/></svg>
<div class="a" style="left:1426px;top:119px;width:1px;height:41px;background:#c0c0c0"></div>
<svg class="a" style="left:1415.5px;top:165.5px;" width="8" height="6" viewBox="0 0 8 6"><path d="M0.8 5 L4 1.5 L7.2 5" stroke="#606060" stroke-width="1.6" fill="none"/></svg>
<div class="a" style="left:1413px;top:175px;width:14px;height:489px;background:#cdcdcd"></div>
<svg class="a" style="left:1415.5px;top:670px;" width="8" height="6" viewBox="0 0 8 6"><path d="M0.8 1 L4 4.5 L7.2 1" stroke="#606060" stroke-width="1.6" fill="none"/></svg>
<div class="a" style="left:126px;top:681px;width:1286px;height:1px;background:#fff"></div>
<svg class="a" style="left:131px;top:685px;" width="6" height="8" viewBox="0 0 6 8"><path d="M5 0.8 L1.5 4 L5 7.2" stroke="#606060" stroke-width="1.6" fill="none"/></svg>
<div class="a" style="left:141px;top:682px;width:1254px;height:13px;background:#cdcdcd"></div>
<svg class="a" style="left:1401px;top:685px;" width="6" height="8" viewBox="0 0 6 8"><path d="M1 0.8 L4.5 4 L1 7.2" stroke="#606060" stroke-width="1.6" fill="none"/></svg>
<div class="a" style="left:0px;top:698px;width:10px;height:51px;border-left:1px solid #bdbdbd;border-right:1px solid #bdbdbd"></div>
<div class="a" style="left:4px;top:703px;width:4px;height:1px;background:#8c8c8c"></div>
<div class="a" style="left:4px;top:707px;width:4px;height:1px;background:#a0a0a0"></div>
<div class="a" style="left:4px;top:711px;width:4px;height:1px;background:#8c8c8c"></div>
<div class="a" style="left:4px;top:714px;width:4px;height:1px;background:#a0a0a0"></div>
<div class="a" style="left:4px;top:718px;width:4px;height:1px;background:#8c8c8c"></div>
<div class="a" style="left:4px;top:722px;width:4px;height:1px;background:#a0a0a0"></div>
<div class="a" style="left:4px;top:726px;width:4px;height:1px;background:#8c8c8c"></div>
<div class="a" style="left:4px;top:729px;width:4px;height:1px;background:#a0a0a0"></div>
<div class="a" style="left:4px;top:733px;width:4px;height:1px;background:#8c8c8c"></div>
<div class="a" style="left:4px;top:737px;width:4px;height:1px;background:#a0a0a0"></div>
<div class="a" style="left:4px;top:741px;width:4px;height:1px;background:#8c8c8c"></div>
<div class="a" style="left:4px;top:744px;width:4px;height:1px;background:#a0a0a0"></div>
<div class="t" style="left:11.50px;top:703.69px;font-size:11px;color:#000;font-weight:normal;">Project Rate (Hz):</div>
<div class="a" style="left:11px;top:720px;width:75px;height:22px;background:#fff;border:1px solid #7a7a7a"></div>
<div class="t" style="left:17.00px;top:725.19px;font-size:11px;color:#000;font-weight:normal;">44100</div>
<svg class="a" style="left:73.5px;top:729px;" width="8" height="5" viewBox="0 0 8 5"><path d="M0.5 0.5 L4 4 L7.5 0.5" stroke="#444" stroke-width="1" fill="none"/></svg>
<div class="a" style="left:105px;top:718px;width:1px;height:24px;background:#a8a8a8"></div>
<div class="t" style="left:111.40px;top:703.69px;font-size:11px;color:#000;font-weight:normal;">Snap To:</div>
<div class="a" style="left:111px;top:720px;width:68px;height:22px;background:#e1e1e1;border:1px solid #adadad"></div>
<div class="a" style="left:115.5px;top:721px;width:48px;height:20px;overflow:hidden"><div class="t" style="left:0;top:4.69px;font-size:11px;color:#000;letter-spacing:0px">Off</div></div>
<svg class="a" style="left:166px;top:728.5px;" width="9" height="5" viewBox="0 0 9 5"><path d="M0.5 0.5 L4.5 4.5 L8.5 0.5" stroke="#444" stroke-width="1.1" fill="none"/></svg>
<div class="t" style="left:185.30px;top:703.69px;font-size:11px;color:#000;font-weight:normal;">Selection Start:</div>
<div class="a" style="left:185px;top:720px;width:136px;height:20px;background:#c4c4c4;border-top:2px solid #808080;border-left:2px solid #808080;border-bottom:1px solid #fff;border-right:1px solid #fff"></div>
<div class="t" style="left:189.00px;top:724.00px;font-size:13px;color:#2a18c8;font-weight:normal;transform:scaleX(0.88);transform-origin:0 0">0</div>
<div class="t" style="left:198.40px;top:724.00px;font-size:13px;color:#2a18c8;font-weight:normal;transform:scaleX(0.88);transform-origin:0 0">0</div>
<div class="t" style="left:209.40px;top:724.00px;font-size:13px;color:#1e1e1e;font-weight:normal;transform:scaleX(0.88);transform-origin:0 0">h</div>
<div class="t" style="left:220.00px;top:724.00px;font-size:13px;color:#2a18c8;font-weight:normal;transform:scaleX(0.88);transform-origin:0 0">0</div>
<div class="t" style="left:229.00px;top:724.00px;font-size:13px;color:#2a18c8;font-weight:normal;transform:scaleX(0.88);transform-origin:0 0">0</div>
<div class="t" style="left:240.00px;top:724.00px;font-size:13px;color:#1e1e1e;font-weight:normal;transform:scaleX(0.88);transform-origin:0 0">m</div>
<div class="t" style="left:254.00px;top:724.00px;font-size:13px;color:#2a18c8;font-weight:normal;transform:scaleX(0.88);transform-origin:0 0">0</div>
<div class="t" style="left:263.40px;top:724.00px;font-size:13px;color:#2a18c8;font-weight:normal;transform:scaleX(0.88);transform-origin:0 0">0</div>
<div class="t" style="left:271.80px;top:724.00px;font-size:13px;color:#2a18c8;font-weight:normal;transform:scaleX(0.88);transform-origin:0 0">.</div>
<div class="t" style="left:275.50px;top:724.00px;font-size:13px;color:#2a18c8;font-weight:normal;transform:scaleX(0.88);transform-origin:0 0">0</div>
<div class="t" style="left:284.70px;top:724.00px;font-size:13px;color:#2a18c8;font-weight:normal;transform:scaleX(0.88);transform-origin:0 0">0</div>
<div class="t" style="left:294.00px;top:724.00px;font-size:13px;color:#2a18c8;font-weight:normal;transform:scaleX(0.88);transform-origin:0 0">0</div>
<div class="t" style="left:305.20px;top:724.00px;font-size:13px;color:#1e1e1e;font-weight:normal;transform:scaleX(0.88);transform-origin:0 0">s</div>
<div class="a" style="left:312px;top:722px;width:9px;height:17px;background:#c8c8c8;border-left:1px solid #fff"></div>
<svg class="a" style="left:313px;top:728px;" width="7" height="4" viewBox="0 0 7 4"><path d="M0 0 H7 L3.5 4 Z" fill="#000"/></svg>
<div class="a" style="left:328px;top:703px;width:12px;height:12px;border-radius:50%;background:#fff;border:1px solid #333"></div>
<div class="a" style="left:331px;top:706px;width:6px;height:6px;border-radius:50%;background:#333"></div>
<div class="t" style="left:343.00px;top:703.69px;font-size:11px;color:#000;font-weight:normal;">End</div>
<div class="a" style="left:372.6px;top:703px;width:12px;height:12px;border-radius:50%;background:#fff;border:1px solid #333"></div>
<div class="t" style="left:387.70px;top:703.69px;font-size:11px;color:#000;font-weight:normal;">Length</div>
<div class="a" style="left:328px;top:720px;width:136px;height:20px;background:#c4c4c4;border-top:2px solid #808080;border-left:2px solid #808080;border-bottom:1px solid #fff;border-right:1px solid #fff"></div>
<div class="t" style="left:332.00px;top:724.00px;font-size:13px;color:#2a18c8;font-weight:normal;transform:scaleX(0.88);transform-origin:0 0">0</div>
<div class="t" style="left:341.40px;top:724.00px;font-size:13px;color:#2a18c8;font-weight:normal;transform:scaleX(0.88);transform-origin:0 0">0</div>
<div class="t" style="left:352.40px;top:724.00px;font-size:13px;color:#1e1e1e;font-weight:normal;transform:scaleX(0.88);transform-origin:0 0">h</div>
<div class="t" style="left:363.00px;top:724.00px;font-size:13px;color:#2a18c8;font-weight:normal;transform:scaleX(0.88);transform-origin:0 0">0</div>
<div class="t" style="left:372.00px;top:724.00px;font-size:13px;color:#2a18c8;font-weight:normal;transform:scaleX(0.88);transform-origin:0 0">0</div>
<div class="t" style="left:383.00px;top:724.00px;font-size:13px;color:#1e1e1e;font-weight:normal;transform:scaleX(0.88);transform-origin:0 0">m</div>
<div class="t" style="left:397.00px;top:724.00px;font-size:13px;color:#2a18c8;font-weight:normal;transform:scaleX(0.88);transform-origin:0 0">0</div>
<div class="t" style="left:406.40px;top:724.00px;font-size:13px;color:#2a18c8;font-weight:normal;transform:scaleX(0.88);transform-origin:0 0">0</div>
<div class="t" style="left:414.80px;top:724.00px;font-size:13px;color:#2a18c8;font-weight:normal;transform:scaleX(0.88);transform-origin:0 0">.</div>
<div class="t" style="left:418.50px;top:724.00px;font-size:13px;color:#2a18c8;font-weight:normal;transform:scaleX(0.88);transform-origin:0 0">0</div>
<div class="t" style="left:427.70px;top:724.00px;font-size:13px;color:#2a18c8;font-weight:normal;transform:scaleX(0.88);transform-origin:0 0">0</div>
<div class="t" style="left:437.00px;top:724.00px;font-size:13px;color:#2a18c8;font-weight:normal;transform:scaleX(0.88);transform-origin:0 0">0</div>
<div class="t" style="left:448.20px;top:724.00px;font-size:13px;color:#1e1e1e;font-weight:normal;transform:scaleX(0.88);transform-origin:0 0">s</div>
<div class="a" style="left:455px;top:722px;width:9px;height:17px;background:#c8c8c8;border-left:1px solid #fff"></div>
<svg class="a" style="left:456px;top:728px;" width="7" height="4" viewBox="0 0 7 4"><path d="M0 0 H7 L3.5 4 Z" fill="#000"/></svg>
<div class="a" style="left:471px;top:718px;width:1px;height:24px;background:#a8a8a8"></div>
<div class="t" style="left:477.60px;top:703.69px;font-size:11px;color:#000;font-weight:normal;letter-spacing:0.2px">Audio Position:</div>
<div class="a" style="left:477px;top:720px;width:136px;height:20px;background:#c4c4c4;border-top:2px solid #808080;border-left:2px solid #808080;border-bottom:1px solid #fff;border-right:1px solid #fff"></div>
<div class="t" style="left:481.00px;top:724.00px;font-size:13px;color:#2a18c8;font-weight:normal;transform:scaleX(0.88);transform-origin:0 0">0</div>
<div class="t" style="left:490.40px;top:724.00px;font-size:13px;color:#2a18c8;font-weight:normal;transform:scaleX(0.88);transform-origin:0 0">0</div>
<div class="t" style="left:501.40px;top:724.00px;font-size:13px;color:#1e1e1e;font-weight:normal;transform:scaleX(0.88);transform-origin:0 0">h</div>
<div class="t" style="left:512.00px;top:724.00px;font-size:13px;color:#2a18c8;font-weight:normal;transform:scaleX(0.88);transform-origin:0 0">0</div>
<div class="t" style="left:521.00px;top:724.00px;font-size:13px;color:#2a18c8;font-weight:normal;transform:scaleX(0.88);transform-origin:0 0">0</div>
<div class="t" style="left:532.00px;top:724.00px;font-size:13px;color:#1e1e1e;font-weight:normal;transform:scaleX(0.88);transform-origin:0 0">m</div>
<div class="t" style="left:546.00px;top:724.00px;font-size:13px;color:#2a18c8;font-weight:normal;transform:scaleX(0.88);transform-origin:0 0">0</div>
<div class="t" style="left:555.40px;top:724.00px;font-size:13px;color:#2a18c8;font-weight:normal;transform:scaleX(0.88);transform-origin:0 0">0</div>
<div class="t" style="left:563.80px;top:724.00px;font-size:13px;color:#2a18c8;font-weight:normal;transform:scaleX(0.88);transform-origin:0 0">.</div>
<div class="t" style="left:567.50px;top:724.00px;font-size:13px;color:#2a18c8;font-weight:normal;transform:scaleX(0.88);transform-origin:0 0">0</div>
<div class="t" style="left:576.70px;top:724.00px;font-size:13px;color:#2a18c8;font-weight:normal;transform:scaleX(0.88);transform-origin:0 0">0</div>
<div class="t" style="left:586.00px;top:724.00px;font-size:13px;color:#2a18c8;font-weight:normal;transform:scaleX(0.88);transform-origin:0 0">0</div>
<div class="t" style="left:597.20px;top:724.00px;font-size:13px;color:#1e1e1e;font-weight:normal;transform:scaleX(0.88);transform-origin:0 0">s</div>
<div class="a" style="left:604px;top:722px;width:9px;height:17px;background:#c8c8c8;border-left:1px solid #fff"></div>
<svg class="a" style="left:605px;top:728px;" width="7" height="4" viewBox="0 0 7 4"><path d="M0 0 H7 L3.5 4 Z" fill="#000"/></svg>
<div class="a" style="left:8px;top:752px;width:1px;height:19px;background:#d8d8d8"></div>
<div class="t" style="left:13.50px;top:756.69px;font-size:11px;color:#000;font-weight:normal;">Stopped.</div>
<div class="a" style="left:137px;top:752px;width:1px;height:19px;background:#d8d8d8"></div>
<div class="a" style="left:1261px;top:752px;width:1px;height:19px;background:#d8d8d8"></div>
<div class="a" style="left:1426px;top:752px;width:1px;height:19px;background:#d8d8d8"></div>
<div class="a" style="left:593px;top:254px;width:241px;height:256px;background:#f0f0f0;border:1px solid #2b7ad0;box-shadow:0 0 12px 2px rgba(0,0,0,0.28)"></div>
<div class="a" style="left:594px;top:255px;width:239px;height:29px;background:#fff"></div>
<div class="t" style="left:601.60px;top:263.69px;font-size:11px;color:#000;font-weight:normal;">Import Raw Data</div>
<svg class="a" style="left:813px;top:264px;" width="10" height="10" viewBox="0 0 10 10"><path d="M0.5 0.5 L9.5 9.5 M9.5 0.5 L0.5 9.5" stroke="#111" stroke-width="1"/></svg>
<div class="t" style="left:598.90px;top:293.69px;font-size:11px;color:#000;font-weight:normal;">Encoding:</div>
<div class="a" style="left:661px;top:288px;width:167px;height:22px;background:#e1e1e1;border:1px solid #adadad"></div>
<div class="a" style="left:664.5px;top:289px;width:147px;height:20px;overflow:hidden"><div class="t" style="left:0;top:4.69px;font-size:11px;color:#000;letter-spacing:0px">VOX ADPCM</div></div>
<svg class="a" style="left:815px;top:296.5px;" width="9" height="5" viewBox="0 0 9 5"><path d="M0.5 0.5 L4.5 4.5 L8.5 0.5" stroke="#444" stroke-width="1.1" fill="none"/></svg>
<div class="t" style="left:598.90px;top:324.69px;font-size:11px;color:#000;font-weight:normal;">Byte order:</div>
<div class="a" style="left:661px;top:319px;width:167px;height:22px;background:#e1e1e1;border:1px solid #adadad"></div>
<div class="a" style="left:664.5px;top:320px;width:147px;height:20px;overflow:hidden"><div class="t" style="left:0;top:4.69px;font-size:11px;color:#000;letter-spacing:0px">Little-endian</div></div>
<svg class="a" style="left:815px;top:327.5px;" width="9" height="5" viewBox="0 0 9 5"><path d="M0.5 0.5 L4.5 4.5 L8.5 0.5" stroke="#444" stroke-width="1.1" fill="none"/></svg>
<div class="t" style="left:598.90px;top:355.69px;font-size:11px;color:#000;font-weight:normal;">Channels:</div>
<div class="a" style="left:661px;top:350px;width:167px;height:22px;background:#e1e1e1;border:1px solid #adadad"></div>
<div class="a" style="left:664.5px;top:351px;width:147px;height:20px;overflow:hidden"><div class="t" style="left:0;top:4.69px;font-size:11px;color:#000;letter-spacing:0px">1 Channel (Mono)</div></div>
<svg class="a" style="left:815px;top:358.5px;" width="9" height="5" viewBox="0 0 9 5"><path d="M0.5 0.5 L4.5 4.5 L8.5 0.5" stroke="#444" stroke-width="1.1" fill="none"/></svg>
<div class="t" style="left:598.50px;top:385.69px;font-size:11px;color:#000;font-weight:normal;">Start offset:</div>
<div class="a" style="left:701px;top:381px;width:56px;height:22px;background:#fff;border:1px solid #7a7a7a"></div>
<div class="t" style="left:706.50px;top:386.19px;font-size:11px;color:#000;font-weight:normal;">0</div>
<div class="t" style="left:765.90px;top:385.69px;font-size:11px;color:#000;font-weight:normal;">bytes</div>
<div class="t" style="left:598.50px;top:416.69px;font-size:11px;color:#000;font-weight:normal;">Amount to import:</div>
<div class="a" style="left:701px;top:412px;width:56px;height:22px;background:#fff;border:1px solid #7a7a7a"></div>
<div class="t" style="left:706.50px;top:417.19px;font-size:11px;color:#000;font-weight:normal;">100</div>
<div class="t" style="left:765.90px;top:416.69px;font-size:11px;color:#000;font-weight:normal;">%</div>
<div class="t" style="left:598.50px;top:447.69px;font-size:11px;color:#000;font-weight:normal;">Sample rate:</div>
<div class="a" style="left:701px;top:443px;width:56px;height:22px;background:#fff;border:1px solid #0078d7"></div>
<div class="t" style="left:706.50px;top:448.19px;font-size:11px;color:#000;font-weight:normal;">16000</div>
<div class="t" style="left:765.90px;top:447.69px;font-size:11px;color:#000;font-weight:normal;">Hz</div>
<div class="a" style="left:652px;top:476px;width:80px;height:23px;background:#e1e1e1;border:2px solid #0078d7"></div>
<div class="t" style="left:677.00px;top:482.19px;font-size:11px;color:#000;font-weight:normal;">Import</div>
<div class="a" style="left:742px;top:476px;width:80px;height:23px;background:#e1e1e1;border:1px solid #adadad"></div>
<div class="t" style="left:765.50px;top:482.19px;font-size:11px;color:#000;font-weight:normal;">Cancel</div>
<div class="a" style="left:827px;top:500px;width:1px;height:1px;background:#999"></div>
<div class="a" style="left:827px;top:503px;width:1px;height:1px;background:#999"></div>
<div class="a" style="left:827px;top:506px;width:1px;height:1px;background:#999"></div>
<div class="a" style="left:824px;top:503px;width:1px;height:1px;background:#999"></div>
<div class="a" style="left:824px;top:506px;width:1px;height:1px;background:#999"></div>
<div class="a" style="left:821px;top:506px;width:1px;height:1px;background:#999"></div>
<!--CONTENT-->
</body></html>
